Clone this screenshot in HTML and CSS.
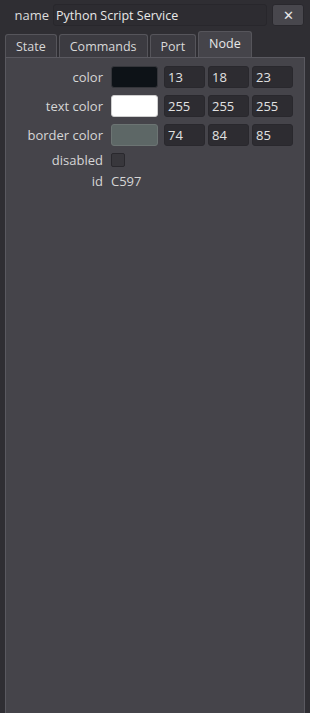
FILE: index.html
```html
<!DOCTYPE html>
<html lang="en">
  <head>
    <meta charset="UTF-8" />
    <meta name="viewport" content="width=device-width, initial-scale=1.0" />
    <title>Node inspector</title>
    <link rel="stylesheet" href="styles.css">
  </head>
  <body>
    <div class="top">
      <span class="top-label">name</span>
      <input class="name-input" type="text" value="Python Script Service" />
      <button class="close-btn">&#x2715;</button>
    </div>
    <div class="tabs">
      <div class="tab">State</div>
      <div class="tab">Commands</div>
      <div class="tab">Port</div>
      <div class="tab active">Node</div>
    </div>
    <div class="panel">
      <div class="row">
        <span class="label">color</span>
        <span class="swatch swatch-dark"></span>
        <span class="num">13</span>
        <span class="num">18</span>
        <span class="num">23</span>
      </div>
      <div class="row">
        <span class="label">text color</span>
        <span class="swatch swatch-white"></span>
        <span class="num">255</span>
        <span class="num">255</span>
        <span class="num">255</span>
      </div>
      <div class="row">
        <span class="label">border color</span>
        <span class="swatch swatch-grey"></span>
        <span class="num">74</span>
        <span class="num">84</span>
        <span class="num">85</span>
      </div>
      <div class="row small">
        <span class="label">disabled</span>
        <span class="check"></span>
      </div>
      <div class="row small">
        <span class="label">id</span>
        <span class="value">C597</span>
      </div>
    </div>
  </body>
</html>
```

FILE: styles.css
```css
:root {
  --fondo: #2f2e33;
  --panel: #45444a;
  --campo: #2d2c31;
  --texto: #dcdcdc;
}

html, body {
  height: 100%;
}

body {
  margin: 0;
  background-color: var(--fondo);
  color: var(--texto);
  font-family: "Open Sans", "DejaVu Sans", sans-serif;
  font-size: 13px;
  display: flex;
  flex-direction: column;
}

.top {
  display: flex;
  align-items: center;
  height: 22px;
  margin: 4px 6px 0 0;
}
.top-label {
  width: 49px;
  text-align: right;
  padding-right: 4px;
}
.name-input {
  box-sizing: border-box;
  width: 214px;
  height: 22px;
  background: var(--campo);
  border: 1px solid #28272c;
  border-radius: 3px;
  color: #e8e8e8;
  font: inherit;
  font-size: 12.5px;
  padding: 0 2px;
  outline: none;
}
.close-btn {
  box-sizing: border-box;
  margin-left: 5px;
  width: 32px;
  height: 22px;
  background: #48474d;
  border: 1px solid #29282d;
  border-radius: 3px;
  color: #e8e8e8;
  font-size: 13px;
  padding: 0;
}

.tabs {
  display: flex;
  align-items: flex-end;
  gap: 2px;
  height: 26px;
  margin: 5px 0 0 5px;
}
.tab {
  box-sizing: border-box;
  height: 23px;
  padding: 0 10px;
  background: #3c3b41;
  border: 1px solid #56555b;
  border-bottom: none;
  border-radius: 3px 3px 0 0;
  line-height: 23px;
  font-size: 12.5px;
  color: #d8d8d8;
}
.tab.active {
  height: 26px;
  line-height: 24px;
  background: var(--panel);
  color: #e8e8e8;
}

.panel {
  flex: 1;
  margin: 0 5px;
  background: var(--panel);
  border: 1px solid #5a5960;
  border-bottom: none;
  padding-top: 8px;
}

.row {
  display: flex;
  align-items: center;
  gap: 3px;
  height: 22px;
  margin-bottom: 7px;
}
.row.small {
  height: 14px;
  margin-bottom: 7px;
}
.label {
  width: 97px;
  text-align: right;
  padding-right: 5px;
  color: #d6d6d6;
}
.swatch {
  box-sizing: border-box;
  width: 47px;
  height: 22px;
  border-radius: 3px;
  margin-right: 3px;
}
.swatch-dark {
  background: #0d1217;
  border: 1px solid #34353a;
}
.swatch-white {
  background: #ffffff;
  border: 1px solid #cfcfcf;
}
.swatch-grey {
  background: #5d6766;
  border: 1px solid #6c7473;
}
.num {
  box-sizing: border-box;
  width: 41px;
  height: 22px;
  line-height: 21px;
  background: var(--campo);
  border: 1px solid #29282d;
  border-radius: 3px;
  padding-left: 3px;
  color: #e2e2e2;
}
.check {
  box-sizing: border-box;
  width: 14px;
  height: 14px;
  background: #38373c;
  border: 1px solid #29282d;
  border-radius: 2px;
}
.value {
  color: #d6d6d6;
}
```
